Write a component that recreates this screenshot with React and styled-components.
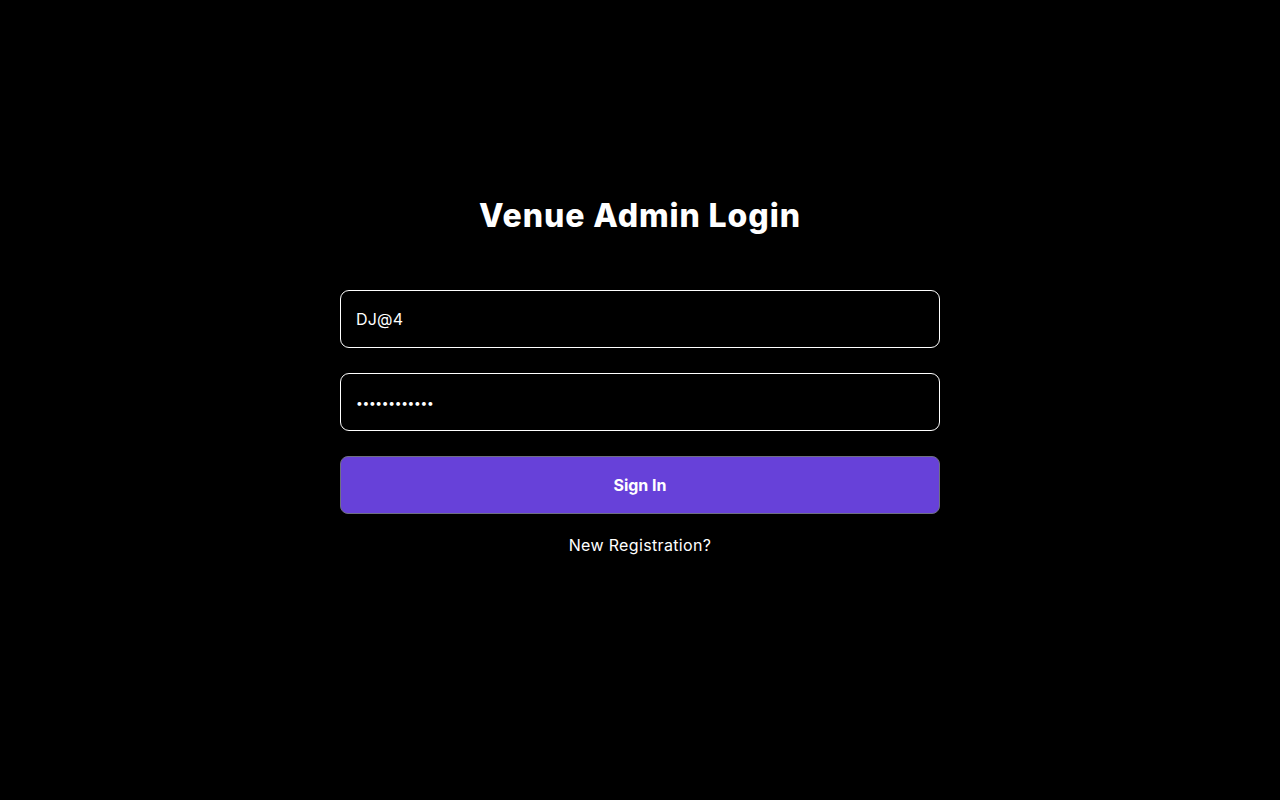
import React from "react";
import styled, { createGlobalStyle } from "styled-components";

const GlobalStyle = createGlobalStyle`
  html, body {
    margin: 0;
    padding: 0;
    background: #000;
    font-family: Inter, "Noto Sans", sans-serif;
  }
`;

function App() {
  return (
    <>
      <GlobalStyle />
      <Page>
        <Title>Venue Admin Login</Title>
        <Form onSubmit={(e) => e.preventDefault()}>
          <Field type="text" defaultValue="DJ@4" />
          <Field type="password" defaultValue="abcdefghijkl" $masked />
          <SubmitButton type="submit">Sign In</SubmitButton>
        </Form>
        <RegisterLink href="#">New Registration?</RegisterLink>
      </Page>
    </>
  );
}

const Page = styled.div`
  min-height: 800px;
  box-sizing: border-box;
  padding-top: 192px;
  display: flex;
  flex-direction: column;
  align-items: center;
  color: #fff;
`;

const Title = styled.h1`
  margin: 0 0 50px;
  font-size: 32px;
  line-height: 48px;
  font-weight: 800;
  letter-spacing: 0.9px;
`;

const Form = styled.form`
  width: 600px;
  display: flex;
  flex-direction: column;
  gap: 25px;
`;

const Field = styled.input`
  box-sizing: border-box;
  width: 100%;
  height: 58px;
  padding: 0 15px;
  background: #000;
  color: #fff;
  border: 1px solid #fff;
  border-radius: 9px;
  font-family: inherit;
  font-size: ${(p) => (p.$masked ? "12px" : "16px")};
  letter-spacing: ${(p) => (p.$masked ? "-0.3px" : "0.2px")};
  outline: none;
`;

const SubmitButton = styled.button`
  box-sizing: border-box;
  width: 100%;
  height: 58px;
  background: #6741d9;
  color: #fff;
  border: 1px solid #6f6f80;
  border-radius: 8px;
  font-family: inherit;
  font-size: 16px;
  font-weight: 700;
  cursor: pointer;
`;

const RegisterLink = styled.a`
  margin-top: 19px;
  font-size: 16px;
  line-height: 24px;
  letter-spacing: 0.35px;
  color: #fff;
  text-decoration: none;
`;

export default App;
